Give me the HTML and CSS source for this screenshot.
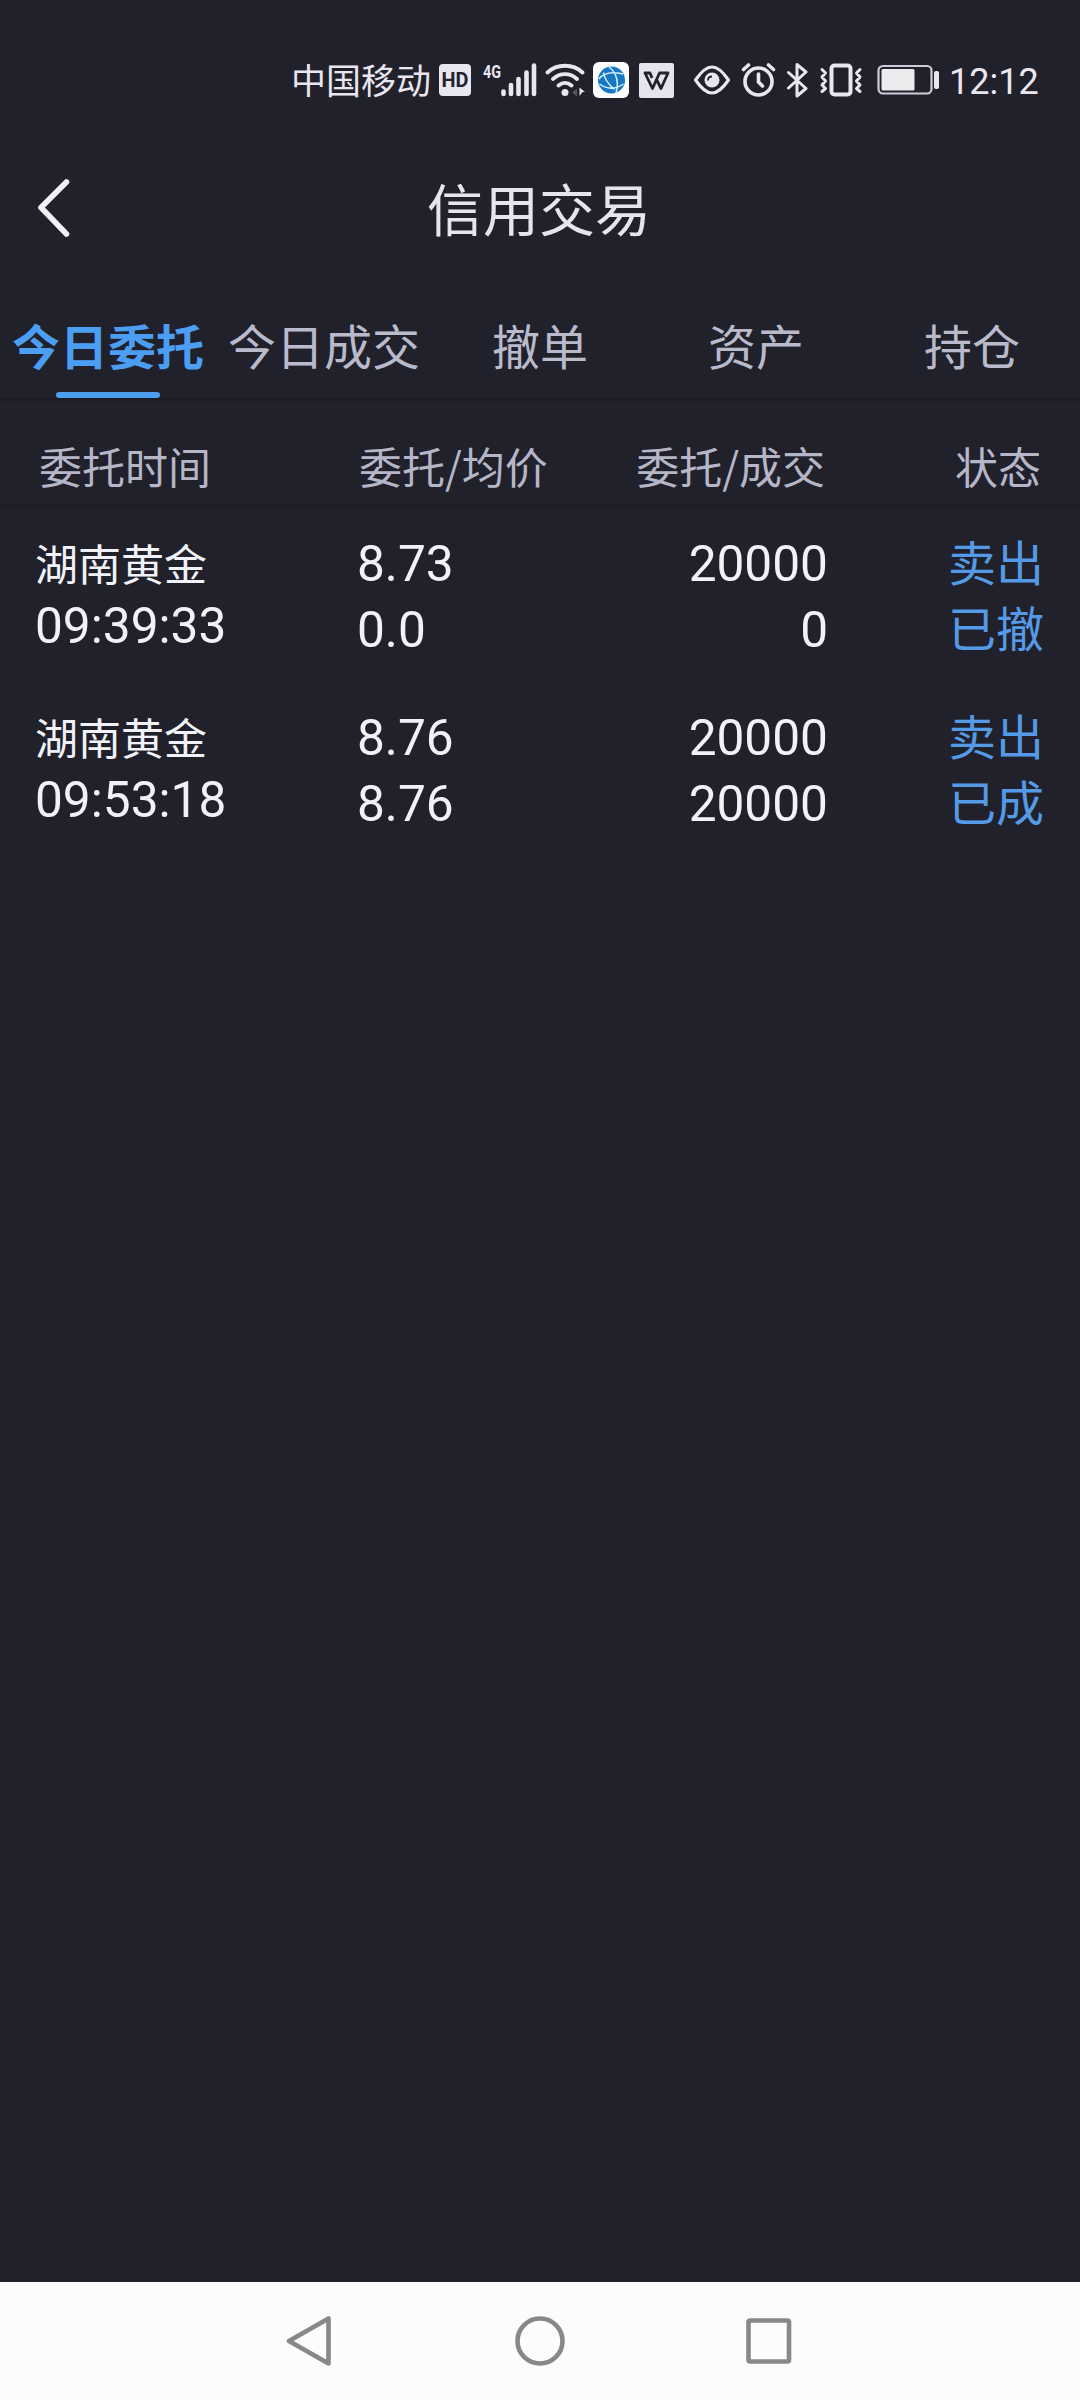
FILE: index.html
```
<!DOCTYPE html>
<html lang="zh-CN">
<head>
    <meta charset="UTF-8">
    <meta name="viewport" content="width=device-width, initial-scale=1.0">
    <title>信用交易</title>
    <link rel="stylesheet" href="styles.css">
</head>
<body>
    <div class="statusbar">
        <span class="carrier">中国移动</span>
        <svg class="icon hd" width="32" height="32" viewBox="0 0 32 32">
            <rect width="32" height="32" rx="4" fill="#e9e6f0"/>
            <text x="2.500" y="23" textLength="27" lengthAdjust="spacingAndGlyphs" font-size="20" font-weight="700" fill="#23222c">HD</text>
        </svg>
        <svg class="icon signal" width="56" height="46" viewBox="0 -5 56 46">
            <text x="1" y="16" textLength="18" lengthAdjust="spacingAndGlyphs" font-size="19" font-weight="700" fill="#e9e6f0">4G</text>
            <path d="M21.500 29.500v2.500M29 23v9M36.500 17v15M44.500 10.500v21.500M52 3.500v28.500" stroke="#e9e6f0" stroke-width="4.600" stroke-linecap="round"/>
        </svg>
        <svg class="icon wifi" width="41" height="36" viewBox="0 0 41 36" fill="none" stroke="#e9e6f0" stroke-width="3.800" stroke-linecap="round">
            <path d="M2.500 10.500C12 1.500 28 1.500 37.500 10.500M8 17c7-6.500 17-6.500 24 0M13.500 23.500c4-3.500 9-3.500 13 0"/>
            <circle cx="20" cy="30.500" r="3.500" fill="#e9e6f0" stroke="none"/>
            <path d="M27 30.500l5-4v8z" fill="#55545e" stroke="none"/>
            <path d="M34.500 25.500l5.500 4.500h-2.500l-3 4z" fill="#e9e6f0" stroke="none"/>
        </svg>
        <svg class="icon globe" width="36" height="36" viewBox="0 0 36 36" fill="none">
            <rect width="36" height="36" rx="6" fill="#fbfdff"/>
            <circle cx="18.500" cy="18" r="13.500" fill="#1678c4"/>
            <path d="M6 17C10 11.500 17 9 30 12M16 5c8 6 10 16 7 26M6.500 22c7 5 15 6 24 0M10.500 10.500c1 7 5 12 11 17" stroke="#d8f1fb" stroke-width="1.500"/>
        </svg>
        <svg class="icon wps" width="35" height="35" viewBox="0 0 35 35">
            <rect width="35" height="35" rx="2" fill="#e6e3ee"/>
            <path d="M13 15l-2-5H6l7.500 15.500L20.500 10H29l-7 15.500-5-10" fill="none" stroke="#23222c" stroke-width="2.800" stroke-linejoin="round"/>
        </svg>
        <svg class="icon eye" width="38" height="32" viewBox="0 0 38 32">
            <path d="M2.500 16C9 6.500 14 3 19 3s10 3.500 16.500 13C29 25.500 24 29 19 29S9 25.500 2.500 16z" fill="none" stroke="#e9e6f0" stroke-width="3.200" stroke-linejoin="round"/>
            <circle cx="19" cy="16" r="7.500" fill="#e9e6f0"/>
            <path d="M15 16.500c0-2.500 1.500-4 4-4" fill="none" stroke="#23222c" stroke-width="1.800"/>
        </svg>
        <svg class="icon alarm" width="35" height="36" viewBox="0 0 35 36" fill="none" stroke="#e9e6f0" stroke-width="3.600" stroke-linecap="round">
            <circle cx="17.500" cy="19.500" r="13.500"/>
            <path d="M17.500 12v8l4 4M2.500 7.500l5-4.500M32.500 7.500L27.500 3"/>
        </svg>
        <svg class="icon bluetooth" width="24" height="36" viewBox="0 0 24 36" fill="none" stroke="#e9e6f0" stroke-width="3" stroke-linejoin="round" stroke-linecap="round">
            <path d="M3.500 10.500L21 26.500l-9 7.500V2.500l9 7.500L3.500 26"/>
        </svg>
        <svg class="icon vibrate" width="44" height="36" viewBox="0 0 44 36" fill="none" stroke="#e9e6f0" stroke-width="3" stroke-linecap="round" stroke-linejoin="round">
            <rect x="12.500" y="3.500" width="19" height="29" rx="3" stroke-width="4"/>
            <path d="M3 7.500l3.500 3.500L3 15l3.500 4L3 23l3.500 3.500L3 29.500M41 7.500L37.500 11l3.500 4-3.500 4 3.500 4-3.500 3.500 3.500 3"/>
        </svg>
        <svg class="icon battery" width="63" height="32" viewBox="0 0 63 32">
            <rect x="1.500" y="2" width="53" height="27.500" rx="4.500" fill="none" stroke="#cfccd6" stroke-width="2.200"/>
            <rect x="4.500" y="5" width="33" height="21.500" rx="1.500" fill="#ecebee"/>
            <rect x="57" y="7" width="5" height="18" rx="2" fill="#e9e6f0"/>
        </svg>
        <span class="time">12:12</span>
    </div>

    <div class="header">
        <svg class="back" width="34" height="60" viewBox="0 0 34 60">
            <path d="M29.500 4L4 29.500l25.500 26.500" fill="none" stroke="#f0f0f5" stroke-width="5.600" stroke-linecap="round" stroke-linejoin="round"/>
        </svg>
        <div class="title">信用交易</div>
    </div>

    <div class="tabs">
        <div class="tab active">今日委托</div>
        <div class="tab">今日成交</div>
        <div class="tab">撤单</div>
        <div class="tab">资产</div>
        <div class="tab">持仓</div>
    </div>

    <div class="table-head">
        <div class="col-time">委托时间</div>
        <div class="col-price">委托/均价</div>
        <div class="col-amount">委托/成交</div>
        <div class="col-state">状态</div>
    </div>

    <div class="list">
        <div class="row">
            <div class="col-time"><div class="name">湖南黄金</div><div>09:39:33</div></div>
            <div class="col-price"><div>8.73</div><div>0.0</div></div>
            <div class="col-amount"><div>20000</div><div>0</div></div>
            <div class="col-state"><div>卖出</div><div>已撤</div></div>
        </div>
        <div class="row">
            <div class="col-time"><div class="name">湖南黄金</div><div>09:53:18</div></div>
            <div class="col-price"><div>8.76</div><div>8.76</div></div>
            <div class="col-amount"><div>20000</div><div>20000</div></div>
            <div class="col-state"><div>卖出</div><div>已成</div></div>
        </div>
    </div>

    <div class="navbar">
        <svg width="50" height="60" viewBox="0 0 50 60">
            <path d="M42.500 7.500v45L3 30z"/>
        </svg>
        <svg width="60" height="60" viewBox="0 0 60 60">
            <circle cx="30" cy="30" r="22.500"/>
        </svg>
        <svg width="50" height="60" viewBox="0 0 50 60">
            <rect x="4.500" y="9.500" width="40.500" height="41" rx="1.500"/>
        </svg>
    </div>
</body>
</html>
```

FILE: styles.css
```
* {
    box-sizing: border-box;
}
body {
    margin: 0;
    height: 2400px;
    display: flex;
    flex-direction: column;
    background-color: #21212b;
    color: #f1f1f8;
    font-family: "Noto Sans CJK SC", sans-serif;
}
svg {
    display: block;
    flex: none;
}

/* status bar */
.statusbar {
    display: flex;
    align-items: center;
    height: 160px;
    padding-left: 291px;
    color: #e9e6f0;
    font-family: Roboto, "Noto Sans CJK SC", sans-serif;
}
.carrier {
    width: 141px;
    font-size: 35px;
    line-height: 40px;
    padding-top: 6px;
    white-space: nowrap;
}
.hd {
    margin-left: 7px;
}
.signal {
    margin-left: 11px;
}
.wifi {
    margin-left: 7px;
}
.globe {
    margin-left: 7px;
}
.wps {
    margin-left: 10px;
}
.eye {
    margin-left: 19px;
}
.alarm {
    margin-left: 10px;
}
.bluetooth {
    margin-left: 9px;
}
.vibrate {
    margin-left: 10px;
}
.battery {
    margin-left: 14px;
}
.time {
    margin-left: 9px;
    padding-top: 4px;
    font-size: 36px;
    line-height: 40px;
}

/* title */
.header {
    display: grid;
    grid-template-columns: 108px 1fr 110px;
    align-items: center;
    height: 93px;
}
.back {
    margin-left: 37px;
    margin-top: 2px;
}
.title {
    text-align: center;
    font-size: 56px;
    line-height: 93px;
    color: #e6e5ee;
}

/* tabs */
.tabs {
    display: grid;
    grid-template-columns: repeat(5, 1fr);
    height: 148px;
    padding-top: 61px;
    border-bottom: 3px solid #1c1c26;
    font-size: 48px;
    line-height: 60px;
    text-align: center;
    color: #b9bacb;
}
.tab.active {
    color: #4c9ef2;
    font-weight: bold;
}
.tab.active::after {
    content: "";
    display: block;
    width: 104px;
    height: 6px;
    margin: 18px auto 0;
    border-radius: 3px;
    background-color: #4c9eec;
}

/* orders */
.table-head, .row {
    display: grid;
    grid-template-columns: 357px 200px 271px 1fr;
}
.table-head {
    height: 106px;
    padding-top: 25px;
    border-bottom: 3px solid #1d1e27;
    font-size: 43px;
    line-height: 78px;
    color: #b5b6c8;
}
.col-amount, .col-state {
    text-align: right;
}
.table-head .col-time {
    padding-left: 39px;
}
.table-head .col-price {
    padding-left: 2px;
}
.table-head .col-amount {
    padding-right: 3px;
}
.table-head .col-state {
    padding-right: 39px;
}
.list {
    flex: 1;
}
.row {
    height: 174px;
    font-family: Roboto, sans-serif;
    font-size: 49.6px;
    line-height: 66px;
}
.row .col-time {
    padding: 23px 0 0 35px;
    line-height: 64px;
}
.row .name {
    font-family: "Noto Sans CJK SC", sans-serif;
    font-size: 43px;
}
.row .col-price, .row .col-amount {
    padding-top: 24px;
}
.row .col-state {
    padding: 20px 36px 0 0;
    font-family: "Noto Sans CJK SC", sans-serif;
    font-size: 48px;
    color: #559ae6;
}

/* system navigation */
.navbar {
    display: flex;
    justify-content: center;
    align-items: center;
    gap: 174px;
    height: 118px;
    background-color: #fdfcfd;
}
.navbar svg {
    fill: none;
    stroke: #888;
    stroke-width: 4.6;
    stroke-linejoin: round;
}
```
